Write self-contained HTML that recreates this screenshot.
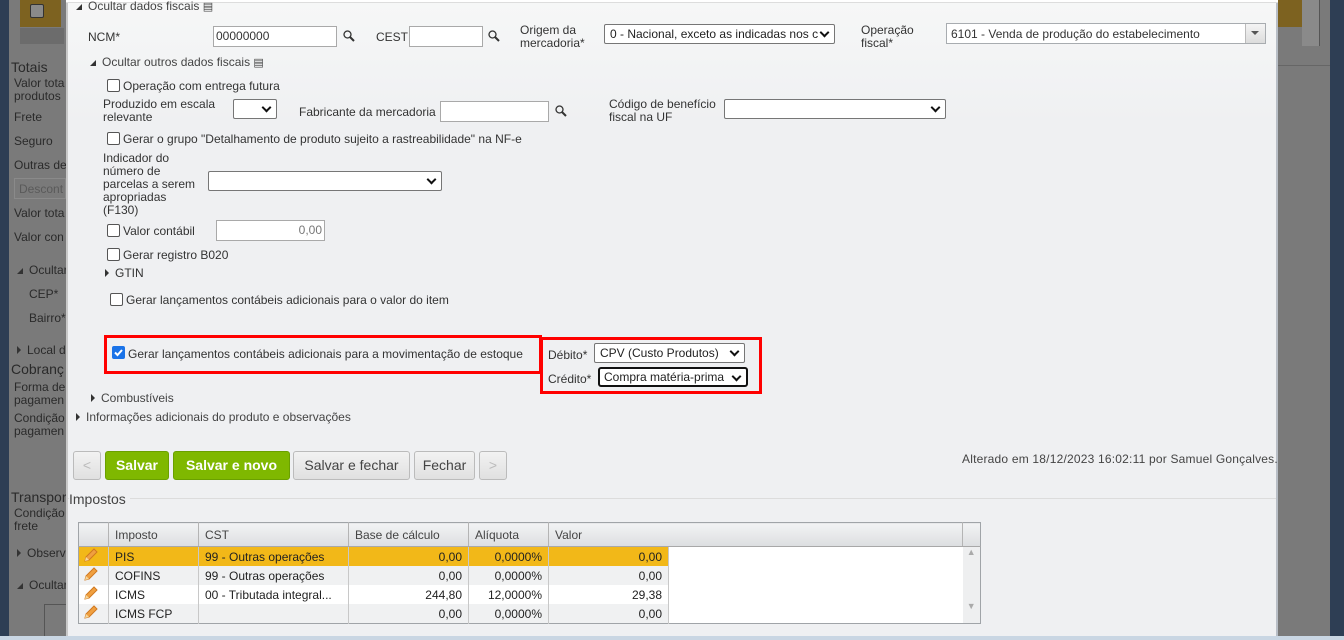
<!DOCTYPE html>
<html><head><meta charset="utf-8"><style>
*{box-sizing:border-box;margin:0;padding:0}
body{width:1344px;height:640px;overflow:hidden;position:relative;background:#7a7a7a;font-family:"Liberation Sans","DejaVu Sans",sans-serif;font-size:12px;color:#333}
.a{position:absolute;white-space:nowrap}
.bg{color:#2a2a2a;font-size:12px}
.panel{position:absolute;left:66px;top:3px;width:1212px;height:633px;background:linear-gradient(#f6f7f7,#eff0f2 120px);border-left:2px solid #c8c8c8;border-right:2px solid #b8bec6}
.in{position:absolute;background:#fff;border:1px solid #a9a9a9;height:21px}
.sel{position:absolute;background:#fff;border:1px solid #767676;border-radius:2px;height:20px;padding:2px 5px;font-size:12px;color:#222}
.sel:after{content:"";position:absolute;right:6px;top:4px;width:5px;height:5px;border-right:2px solid #111;border-bottom:2px solid #111;transform:rotate(45deg)}
.cb{position:absolute;width:13px;height:13px;border:1px solid #555;border-radius:2px;background:#fff}
.tri{display:inline-block;width:0;height:0;border-top:4px solid transparent;border-bottom:4px solid transparent;border-left:4px solid #333;margin-right:6px;vertical-align:0px}
.trd{display:inline-block;width:0;height:0;border-left:6px solid transparent;border-bottom:6px solid #333;margin-right:6px}
.btn{position:absolute;top:451px;height:29px;border-radius:3px;font-size:14px;text-align:center;line-height:27px}
.g{background:#7fb800;border:1px solid #6aa000;color:#fff;font-weight:bold}
.gr{background:linear-gradient(#f2f2f2,#e0e0e0);border:1px solid #bbb;color:#444}
table{position:absolute;left:78px;top:522px;border-collapse:collapse;border:1px solid #a0a4a8;table-layout:fixed;width:902px}
td{height:18px;font-size:12px;padding:0 6px;border-right:1px solid #c8c8c8;color:#222;overflow:hidden}
th{height:24px;font-weight:normal;text-align:left;padding:0 6px;background:linear-gradient(#f2f3f4,#dcdee0);border-right:1px solid #b4b4b4;border-bottom:1px solid #a8a8a8;color:#444}
.r{text-align:right}
.p{padding:0 3px}
</style></head><body>
<div class="a" style="left:0;top:0;width:9px;height:640px;background:#2e3e54"></div>
<div class="a" style="left:20px;top:0;width:41px;height:27px;background:#7d6220"></div>
<div class="a" style="left:30px;top:4px;width:14px;height:14px;border:1px solid #333;background:#8a8a8a;border-radius:2px"></div>
<div class="a" style="left:20px;top:28px;width:44px;height:16px;background:#6c6c6c"></div>
<div class="a bg" style="left:11px;top:59px;font-size:14px">Totais</div>
<div class="a bg" style="left:14px;top:77px;line-height:13px">Valor tota<br>produtos</div>
<div class="a bg" style="left:14px;top:110px">Frete</div>
<div class="a bg" style="left:14px;top:134px">Seguro</div>
<div class="a bg" style="left:14px;top:158px">Outras de</div>
<div class="a" style="left:14px;top:178px;width:52px;height:21px;border:1px solid #8a8a8a;color:#5a5a5a;padding:3px 4px">Descont</div>
<div class="a bg" style="left:14px;top:206px">Valor tota</div>
<div class="a bg" style="left:14px;top:230px">Valor con</div>
<div class="a bg" style="left:17px;top:263px"><span class="trd"></span>Ocultar</div>
<div class="a bg" style="left:29px;top:287px">CEP*</div>
<div class="a bg" style="left:29px;top:311px">Bairro*</div>
<div class="a bg" style="left:17px;top:343px"><span class="tri"></span>Local d</div>
<div class="a bg" style="left:11px;top:361px;font-size:14px">Cobranç</div>
<div class="a bg" style="left:14px;top:381px;line-height:13px">Forma de<br>pagamen</div>
<div class="a bg" style="left:14px;top:412px;line-height:13px">Condição<br>pagamen</div>
<div class="a bg" style="left:11px;top:489px;font-size:14px">Transpor</div>
<div class="a bg" style="left:14px;top:507px;line-height:13px">Condição<br>frete</div>
<div class="a bg" style="left:17px;top:546px"><span class="tri"></span>Observ</div>
<div class="a bg" style="left:17px;top:578px"><span class="trd"></span>Ocultar</div>
<div class="a" style="left:44px;top:604px;width:22px;height:36px;border-left:1px solid #555;border-top:1px solid #555"></div>
<div class="a" style="left:1278px;top:0;width:52px;height:640px;background:#7a7a7a"></div>
<div class="a" style="left:1278px;top:0;width:24px;height:27px;background:#7d6220"></div>
<div class="a" style="left:1302px;top:0;width:18px;height:46px;background:#8a8a8a;border-right:1px solid #555"></div>
<div class="a" style="left:1278px;top:65px;width:52px;height:1px;background:#666"></div>
<div class="a" style="left:1330px;top:0;width:14px;height:640px;background:#2e3e54"></div>
<div class="a" style="left:0;top:636px;width:1344px;height:4px;background:#c9d6e3"></div>

<div class="panel"></div>
<div class="a" style="left:66px;top:0;width:1212px;height:3px;background:#fff;border-bottom:1px solid #ddd"></div>

<div class="a" style="left:76px;top:-1px;color:#444"><span class="trd"></span>Ocultar dados fiscais <span style="font-size:11px">▤</span></div>
<div class="a" style="left:88px;top:30px">NCM*</div>
<div class="in" style="left:213px;top:26px;width:124px;padding:2px 2px">00000000</div>
<svg class="a" style="left:343px;top:30px" width="12" height="12"><circle cx="4.5" cy="4.5" r="3.5" fill="none" stroke="#333" stroke-width="1.3"/><path d="M7 7l4 4" stroke="#333" stroke-width="2"/></svg>
<div class="a" style="left:376px;top:30px">CEST</div>
<div class="in" style="left:409px;top:26px;width:74px"></div>
<svg class="a" style="left:488px;top:30px" width="12" height="12"><circle cx="4.5" cy="4.5" r="3.5" fill="none" stroke="#333" stroke-width="1.3"/><path d="M7 7l4 4" stroke="#333" stroke-width="2"/></svg>
<div class="a" style="left:520px;top:24px;line-height:13px">Origem da<br>mercadoria*</div>
<div class="sel" style="left:604px;top:24px;width:231px;overflow:hidden">0 - Nacional, exceto as indicadas nos c</div>
<div class="a" style="left:861px;top:24px;line-height:13px">Operação<br>fiscal*</div>
<div class="in" style="left:946px;top:23px;width:320px;padding:3px 4px;border-color:#a8acb0">6101 - Venda de produção do estabelecimento</div>
<div class="a" style="left:1245px;top:24px;width:20px;height:19px;background:linear-gradient(#f4f4f4,#dcdcdc);border-left:1px solid #bbb"></div>
<div class="a" style="left:1251px;top:31px;border-left:4px solid transparent;border-right:4px solid transparent;border-top:4px solid #555"></div>

<div class="a" style="left:90px;top:55px;color:#444"><span class="trd"></span>Ocultar outros dados fiscais <span style="font-size:11px">▤</span></div>
<div class="cb" style="left:107px;top:79px"></div><div class="a" style="left:123px;top:79px">Operação com entrega futura</div>
<div class="a" style="left:103px;top:98px;line-height:13px">Produzido em escala<br>relevante</div>
<div class="sel" style="left:233px;top:99px;width:44px"></div>
<div class="a" style="left:299px;top:105px">Fabricante da mercadoria</div>
<div class="in" style="left:440px;top:101px;width:109px"></div>
<svg class="a" style="left:555px;top:105px" width="12" height="12"><circle cx="4.5" cy="4.5" r="3.5" fill="none" stroke="#333" stroke-width="1.3"/><path d="M7 7l4 4" stroke="#333" stroke-width="2"/></svg>
<div class="a" style="left:609px;top:98px;line-height:13px">Código de benefício<br>fiscal na UF</div>
<div class="sel" style="left:724px;top:99px;width:222px"></div>
<div class="cb" style="left:107px;top:132px"></div><div class="a" style="left:123px;top:132px">Gerar o grupo "Detalhamento de produto sujeito a rastreabilidade" na NF-e</div>
<div class="a" style="left:103px;top:152px;line-height:13px">Indicador do<br>número de<br>parcelas a serem<br>apropriadas<br>(F130)</div>
<div class="sel" style="left:208px;top:171px;width:234px"></div>
<div class="cb" style="left:107px;top:224px"></div><div class="a" style="left:123px;top:224px">Valor contábil</div>
<div class="in" style="left:216px;top:220px;width:109px;text-align:right;padding:2px 2px;color:#777">0,00</div>
<div class="cb" style="left:107px;top:248px"></div><div class="a" style="left:123px;top:248px">Gerar registro B020</div>
<div class="a" style="left:105px;top:266px"><span class="tri"></span>GTIN</div>
<div class="cb" style="left:110px;top:293px"></div><div class="a" style="left:126px;top:293px">Gerar lançamentos contábeis adicionais para o valor do item</div>

<div class="a" style="left:104px;top:335px;width:438px;height:39px;border:3px solid #f00"></div>
<div class="a" style="left:112px;top:346px;width:13px;height:13px;background:#1a73e8;border-radius:2px"></div>
<svg class="a" style="left:112px;top:346px" width="13" height="13"><path d="M3 6.5l2.5 2.5 4.5-5" fill="none" stroke="#fff" stroke-width="2"/></svg>
<div class="a" style="left:128px;top:347px">Gerar lançamentos contábeis adicionais para a movimentação de estoque</div>
<div class="a" style="left:540px;top:337px;width:222px;height:57px;border:3px solid #f00"></div>
<div class="a" style="left:548px;top:348px">Débito*</div>
<div class="sel" style="left:594px;top:343px;width:151px">CPV (Custo Produtos)</div>
<div class="a" style="left:548px;top:372px">Crédito*</div>
<div class="sel" style="left:598px;top:367px;width:150px;border:2px solid #111;border-radius:3px;padding:1px 4px">Compra matéria-prima</div>

<div class="a" style="left:91px;top:391px;color:#444"><span class="tri"></span>Combustíveis</div>
<div class="a" style="left:76px;top:410px;color:#444"><span class="tri"></span>Informações adicionais do produto e observações</div>

<div class="btn gr" style="left:73px;width:28px;color:#bbb">&lt;</div>
<div class="btn g" style="left:105px;width:64px">Salvar</div>
<div class="btn g" style="left:173px;width:117px">Salvar e novo</div>
<div class="btn gr" style="left:293px;width:117px">Salvar e fechar</div>
<div class="btn gr" style="left:414px;width:61px">Fechar</div>
<div class="btn gr" style="left:479px;width:28px;color:#bbb">&gt;</div>
<div class="a" style="left:962px;top:452px;color:#444;letter-spacing:0.2px">Alterado em 18/12/2023 16:02:11 por Samuel Gonçalves.</div>

<div class="a" style="left:68px;top:498px;width:1208px;height:1px;background:#dcdcdc"></div>
<div class="a" style="left:69px;top:491px;font-size:14px;color:#444;background:#eff0f2;padding-right:4px">Impostos</div>

<table>
<colgroup><col style="width:30px"><col style="width:90px"><col style="width:150px"><col style="width:120px"><col style="width:80px"><col style="width:120px"><col style="width:294px"><col style="width:18px"></colgroup>
<tr><th></th><th>Imposto</th><th>CST</th><th>Base de cálculo</th><th>Alíquota</th><th style="border-right:0">Valor</th><th></th><th style="border-right:0"></th></tr>
<tr style="background:#f2b818;height:18px"><td class="p"><svg width="16" height="16"><path d="M3 14l1-4 8-8 3 3-8 8z" fill="#f0a040" stroke="#d07820"/><path d="M3 14l1-4 3 3z" fill="#f5d9a0"/></svg></td><td>PIS</td><td>99 - Outras operações</td><td class="r">0,00</td><td class="r">0,0000%</td><td class="r">0,00</td><td style="background:#fff;border:0"></td><td rowspan="4" style="background:#eeeff0;border:0;vertical-align:top;color:#aaa;font-size:9px;text-align:center;padding:0">▲<div style="height:44px"></div>▼</td></tr>
<tr style="background:#f0f1f2;height:18px"><td class="p"><svg width="16" height="16"><path d="M3 14l1-4 8-8 3 3-8 8z" fill="#f0a040" stroke="#d07820"/><path d="M3 14l1-4 3 3z" fill="#f5d9a0"/></svg></td><td>COFINS</td><td>99 - Outras operações</td><td class="r">0,00</td><td class="r">0,0000%</td><td class="r">0,00</td><td style="background:#fff;border:0"></td></tr>
<tr style="background:#fff;height:18px"><td class="p"><svg width="16" height="16"><path d="M3 14l1-4 8-8 3 3-8 8z" fill="#f0a040" stroke="#d07820"/><path d="M3 14l1-4 3 3z" fill="#f5d9a0"/></svg></td><td>ICMS</td><td>00 - Tributada integral...</td><td class="r">244,80</td><td class="r">12,0000%</td><td class="r">29,38</td><td style="border:0"></td></tr>
<tr style="background:#f0f1f2;height:18px"><td class="p"><svg width="16" height="16"><path d="M3 14l1-4 8-8 3 3-8 8z" fill="#f0a040" stroke="#d07820"/><path d="M3 14l1-4 3 3z" fill="#f5d9a0"/></svg></td><td>ICMS FCP</td><td></td><td class="r">0,00</td><td class="r">0,0000%</td><td class="r">0,00</td><td style="background:#fff;border:0"></td></tr>
</table>
</body></html>
